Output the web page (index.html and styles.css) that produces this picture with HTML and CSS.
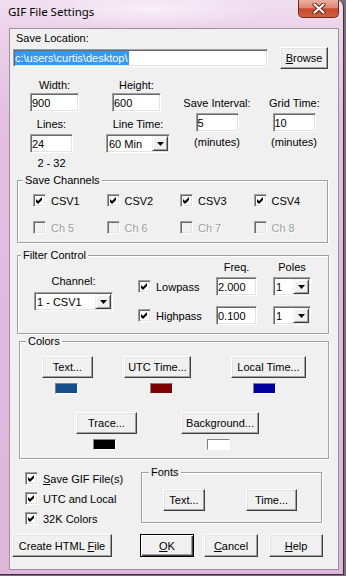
FILE: index.html
```html
<!DOCTYPE html>
<html lang="en">
<head>
  <meta charset="UTF-8" />
  <title>GIF File Settings</title>
  <link rel="stylesheet" href="styles.css">
</head>
<body>
  <div class="window">
    <div class="titlebar">
      <span class="title">GIF File Settings</span>
      <span class="close">
        <svg width="14" height="11" viewBox="0 0 14 11">
          <path d="M2.5 1.5 L11.5 9.5 M11.5 1.5 L2.5 9.5" stroke="#5a1d14" stroke-width="4" stroke-linecap="round" fill="none"/>
          <path d="M2.5 1.5 L11.5 9.5 M11.5 1.5 L2.5 9.5" stroke="#fff" stroke-width="2.2" stroke-linecap="round" fill="none"/>
        </svg>
      </span>
    </div>

    <div class="client">
      <div class="label loc-label">Save Location:</div>
      <div class="loc-row">
        <div class="edit loc-edit"><span class="sel">c:\users\curtis\desktop\</span></div>
        <button class="btn browse"><u>B</u>rowse</button>
      </div>

      <div class="size-area">
        <div class="col col1">
          <div class="label">Width:</div>
          <div class="edit w49 gap1">900</div>
          <div class="label w43 gap6">Lines:</div>
          <div class="edit w43 gap3">24</div>
          <div class="label w43 gap4">2 - 32</div>
        </div>
        <div class="col col2">
          <div class="label w49 ml6">Height:</div>
          <div class="edit w49 ml6 gap1">600</div>
          <div class="label gap6">Line Time:</div>
          <div class="combo gap3"><span class="combo-text">60 Min</span><span class="drop"><svg width="7" height="4" viewBox="0 0 7 4"><path d="M0 0 H7 L3.5 4 Z" fill="#000"/></svg></span></div>
        </div>
        <div class="col col3">
          <div class="label">Save Interval:</div>
          <div class="edit w43 center gap3">5</div>
          <div class="label gap4">(minutes)</div>
        </div>
        <div class="col col4">
          <div class="label">Grid Time:</div>
          <div class="edit w43 center gap3">10</div>
          <div class="label gap4">(minutes)</div>
        </div>
      </div>

      <div class="group channels">
        <div class="legend">Save Channels</div>
        <div class="chk-row first">
          <label class="chk"><span class="box"><svg width="9" height="9" viewBox="0 0 9 9"><path d="M1 3 L3 5 L7 1 L7 4 L3 8 L1 6 Z" fill="#000"/></svg></span>CSV1</label>
          <label class="chk"><span class="box"><svg width="9" height="9" viewBox="0 0 9 9"><path d="M1 3 L3 5 L7 1 L7 4 L3 8 L1 6 Z" fill="#000"/></svg></span>CSV2</label>
          <label class="chk"><span class="box"><svg width="9" height="9" viewBox="0 0 9 9"><path d="M1 3 L3 5 L7 1 L7 4 L3 8 L1 6 Z" fill="#000"/></svg></span>CSV3</label>
          <label class="chk"><span class="box"><svg width="9" height="9" viewBox="0 0 9 9"><path d="M1 3 L3 5 L7 1 L7 4 L3 8 L1 6 Z" fill="#000"/></svg></span>CSV4</label>
        </div>
        <div class="chk-row second">
          <label class="chk off"><span class="box"></span>Ch 5</label>
          <label class="chk off"><span class="box"></span>Ch 6</label>
          <label class="chk off"><span class="box"></span>Ch 7</label>
          <label class="chk off"><span class="box"></span>Ch 8</label>
        </div>
      </div>

      <div class="group filter">
        <div class="legend">Filter Control</div>
        <div class="filter-body">
          <div class="col fc1">
            <div class="label">Channel:</div>
            <div class="combo gap4"><span class="combo-text">1 - CSV1</span><span class="drop"><svg width="7" height="4" viewBox="0 0 7 4"><path d="M0 0 H7 L3.5 4 Z" fill="#000"/></svg></span></div>
          </div>
          <div class="col fc2">
            <label class="chk line"><span class="box"><svg width="9" height="9" viewBox="0 0 9 9"><path d="M1 3 L3 5 L7 1 L7 4 L3 8 L1 6 Z" fill="#000"/></svg></span>Lowpass</label>
            <label class="chk line gap10"><span class="box"><svg width="9" height="9" viewBox="0 0 9 9"><path d="M1 3 L3 5 L7 1 L7 4 L3 8 L1 6 Z" fill="#000"/></svg></span>Highpass</label>
          </div>
          <div class="col fc3">
            <div class="label">Freq.</div>
            <div class="edit gap3">2.000</div>
            <div class="edit gap10">0.100</div>
          </div>
          <div class="col fc4">
            <div class="label">Poles</div>
            <div class="combo gap3"><span class="combo-text">1</span><span class="drop"><svg width="7" height="4" viewBox="0 0 7 4"><path d="M0 0 H7 L3.5 4 Z" fill="#000"/></svg></span></div>
            <div class="combo gap10"><span class="combo-text">1</span><span class="drop"><svg width="7" height="4" viewBox="0 0 7 4"><path d="M0 0 H7 L3.5 4 Z" fill="#000"/></svg></span></div>
          </div>
        </div>
      </div>

      <div class="group colors">
        <div class="legend">Colors</div>
        <div class="color-row top">
          <div class="pick p-text"><button class="btn">Text...</button><span class="swatch sw-text"></span></div>
          <div class="pick p-utc"><button class="btn">UTC Time...</button><span class="swatch sw-utc"></span></div>
          <div class="pick p-local"><button class="btn">Local Time...</button><span class="swatch sw-local"></span></div>
        </div>
        <div class="color-row bottom">
          <div class="pick p-trace"><button class="btn">Trace...</button><span class="swatch sw-trace"></span></div>
          <div class="pick p-bg"><button class="btn">Background...</button><span class="swatch sw-bg"></span></div>
        </div>
      </div>

      <div class="lower">
        <div class="opts">
          <label class="chk"><span class="box"><svg width="9" height="9" viewBox="0 0 9 9"><path d="M1 3 L3 5 L7 1 L7 4 L3 8 L1 6 Z" fill="#000"/></svg></span><span><u>S</u>ave GIF File(s)</span></label>
          <label class="chk"><span class="box"><svg width="9" height="9" viewBox="0 0 9 9"><path d="M1 3 L3 5 L7 1 L7 4 L3 8 L1 6 Z" fill="#000"/></svg></span>UTC and Local</label>
          <label class="chk"><span class="box"><svg width="9" height="9" viewBox="0 0 9 9"><path d="M1 3 L3 5 L7 1 L7 4 L3 8 L1 6 Z" fill="#000"/></svg></span>32K Colors</label>
        </div>
        <div class="group fonts">
          <div class="legend">Fonts</div>
          <div class="font-row">
            <button class="btn f-text">Text...</button>
            <button class="btn f-time">Time...</button>
          </div>
        </div>
      </div>

      <div class="actions">
        <button class="btn a-html">Create HTML <u>F</u>ile</button>
        <button class="btn default a-ok"><u>O</u>K</button>
        <button class="btn a-cancel"><u>C</u>ancel</button>
        <button class="btn a-help"><u>H</u>elp</button>
      </div>
    </div>
  </div>
</body>
</html>
```

FILE: styles.css
```css
* { box-sizing: border-box; }
body { margin: 0; background: #7d6a7b; font-family: "Liberation Sans", Arial, sans-serif; font-size: 11px; color: #000; }

.window { width: 344px; height: 575px; border-right: 1px solid #3e2e3c; border-bottom: 1px solid #3e2e3c; border-top-right-radius: 7px;
  background: linear-gradient(180deg, #f1dff0 0, #ecd3ea 28px, #e3bfe0 120px, #dfb6dc 100%); }

.titlebar { height: 28px; display: flex; align-items: flex-start;
  background: radial-gradient(ellipse 120px 18px at 150px 10px, rgba(255,255,255,0.55), rgba(255,255,255,0)); }
.title { margin: 5px 0 0 8px; font-family: "Noto Sans", sans-serif; font-size: 11.5px; line-height: 14px; }
.close { margin-left: auto; margin-right: 4px; width: 41px; height: 18px; display: flex; align-items: center; justify-content: center;
  border: 1px solid #6e2a20; border-top: none; border-radius: 0 0 5px 5px;
  background: linear-gradient(180deg, #eab0a2 0, #dd8a72 45%, #c84a2c 52%, #cf5f40 100%); }

.client { margin-left: 9px; width: 330px; height: 542px; background: #f0f0f0; border: 1px solid #9c8f9b; }

.label { line-height: 13px; white-space: nowrap; text-align: center; }
.loc-label { margin: 3px 0 0 6px; text-align: left; }

/* sunken edit box */
.edit { height: 19px; background: #fff; display: flex; align-items: center; padding-left: 1px; white-space: nowrap;
  border: 1px solid; border-color: #a0a0a0 #fff #fff #a0a0a0; box-shadow: inset 1px 1px #696969, inset -1px -1px #e3e3e3; }
.w49 { width: 49px; }
.w43 { width: 43px; }
.ml6 { margin-left: 6px; }
.center { align-self: center; }
.gap1 { margin-top: 1px; }
.gap3 { margin-top: 3px; }
.gap4 { margin-top: 4px; }
.gap6 { margin-top: 6px; }
.gap10 { margin-top: 10px; }

.loc-row { display: flex; align-items: center; height: 20px; margin-top: 3px; }
.loc-edit { margin-left: 3px; width: 255px; height: 18px; }
.sel { background: #3399ff; color: #fff; line-height: 14px; padding-right: 1px; }
.browse { margin-left: 12px; width: 48px; height: 20px; }

/* raised push button */
.btn { font-family: inherit; font-size: 11px; color: #000; padding: 0; background: #f0f0f0; height: 22px; white-space: nowrap;
  border: 1px solid; border-color: #fff #404040 #404040 #fff; box-shadow: inset -1px -1px #a0a0a0, inset 1px 1px #e3e3e3; }
.btn.default { border-color: #000; box-shadow: inset 1px 1px #fff, inset -1px -1px #404040, inset -2px -2px #a0a0a0; }

/* combo box */
.combo { height: 19px; display: flex; background: #fff; border: 1px solid; border-color: #a0a0a0 #fff #fff #a0a0a0;
  box-shadow: inset 1px 1px #696969, inset -1px -1px #e3e3e3; padding: 1px; }
.combo-text { flex: 1; display: flex; align-items: center; padding-left: 1px; white-space: nowrap; }
.drop { width: 16px; display: flex; align-items: center; justify-content: center; background: #f0f0f0;
  border: 1px solid; border-color: #f0f0f0 #404040 #404040 #f0f0f0; box-shadow: inset 1px 1px #fff, inset -1px -1px #a0a0a0; }

.size-area { display: flex; align-items: flex-start; height: 112px; }
.col { display: flex; flex-direction: column; }
.col1 { margin-left: 20px; width: 49px; padding-top: 11px; }
.col2 { margin-left: 27px; width: 64px; padding-top: 11px; }
.col3 { margin-left: 12px; width: 70px; padding-top: 29px; }
.col4 { margin-left: 17px; width: 50px; padding-top: 29px; }

/* group boxes */
.group { border: 1px solid #a0a0a0; box-shadow: inset 1px 1px #fff, 1px 1px #fff; }
.legend { display: table; line-height: 13px; margin-top: -7px; padding: 0 2px; background: #f0f0f0; }

.channels { margin-left: 7px; width: 311px; height: 63px; }
.channels .legend { margin-left: 5px; }
.chk-row { display: flex; margin-left: 15px; }
.chk-row.first { margin-top: 7px; }
.chk-row.second { margin-top: 14px; }
.chk-row .chk { width: 74px; }

.chk { display: flex; align-items: center; gap: 5px; height: 13px; white-space: nowrap; }
.box { width: 13px; height: 13px; flex: none; background: #fff; display: flex; align-items: center; justify-content: center;
  border: 1px solid; border-color: #a0a0a0 #fff #fff #a0a0a0; box-shadow: inset 1px 1px #696969, inset -1px -1px #e3e3e3; }
.chk.off { color: #a0a0a0; text-shadow: 1px 1px 0 #fff; }
.chk.off .box { background: #f0f0f0; }
.chk.line { height: 19px; }

.filter { margin: 12px 0 0 7px; width: 312px; height: 79px; }
.filter .legend { margin-left: 3px; }
.filter-body { display: flex; align-items: flex-start; }
.fc1 { margin-left: 16px; width: 79px; padding-top: 13px; }
.fc2 { margin-left: 25px; width: 70px; padding-top: 15px; }
.fc3 { margin: -1px 0 0 8px; width: 41px; }
.fc4 { margin: -1px 0 0 16px; width: 38px; }

.colors { margin: 7px 0 0 9px; width: 310px; height: 118px; }
.colors .legend { margin-left: 6px; }
.color-row { display: flex; align-items: flex-start; }
.color-row.top { margin-top: 8px; }
.color-row.bottom { margin-top: 18px; }
.pick { display: flex; flex-direction: column; align-items: flex-start; }
.pick .btn { width: 100%; }
.swatch { margin-top: 5px; width: 23px; height: 11px; border: 1px solid; border-color: #808080 #fff #fff #808080; }
.p-text { margin-left: 22px; width: 51px; }
.p-text .swatch { margin-left: 13px; background: #134f8d; }
.p-utc { margin-left: 31px; width: 67px; }
.p-utc .swatch { margin-left: 26px; background: #7f0000; }
.p-local { margin-left: 40px; width: 75px; }
.p-local .swatch { margin-left: 22px; background: #0000a0; }
.p-trace { margin-left: 56px; width: 61px; }
.p-trace .swatch { margin-left: 17px; background: #000; }
.p-bg { margin-left: 44px; width: 78px; }
.p-bg .swatch { margin-left: 26px; background: #fff; }

.lower { display: flex; align-items: flex-start; height: 66px; }
.opts { margin-left: 15px; width: 116px; padding-top: 13px; display: flex; flex-direction: column; gap: 7px; }
.fonts { margin-top: 13px; width: 181px; height: 51px; }
.fonts .legend { margin-left: 7px; }
.font-row { display: flex; margin-top: 10px; }
.f-text { margin-left: 21px; width: 42px; }
.f-time { margin-left: 41px; width: 51px; }

.actions { display: flex; margin-top: 9px; }
.actions .btn { height: 23px; }
.a-html { margin-left: 2px; width: 100px; }
.a-ok { margin-left: 28px; width: 54px; }
.a-cancel { margin-left: 10px; width: 54px; }
.a-help { margin-left: 11px; width: 54px; }
```
